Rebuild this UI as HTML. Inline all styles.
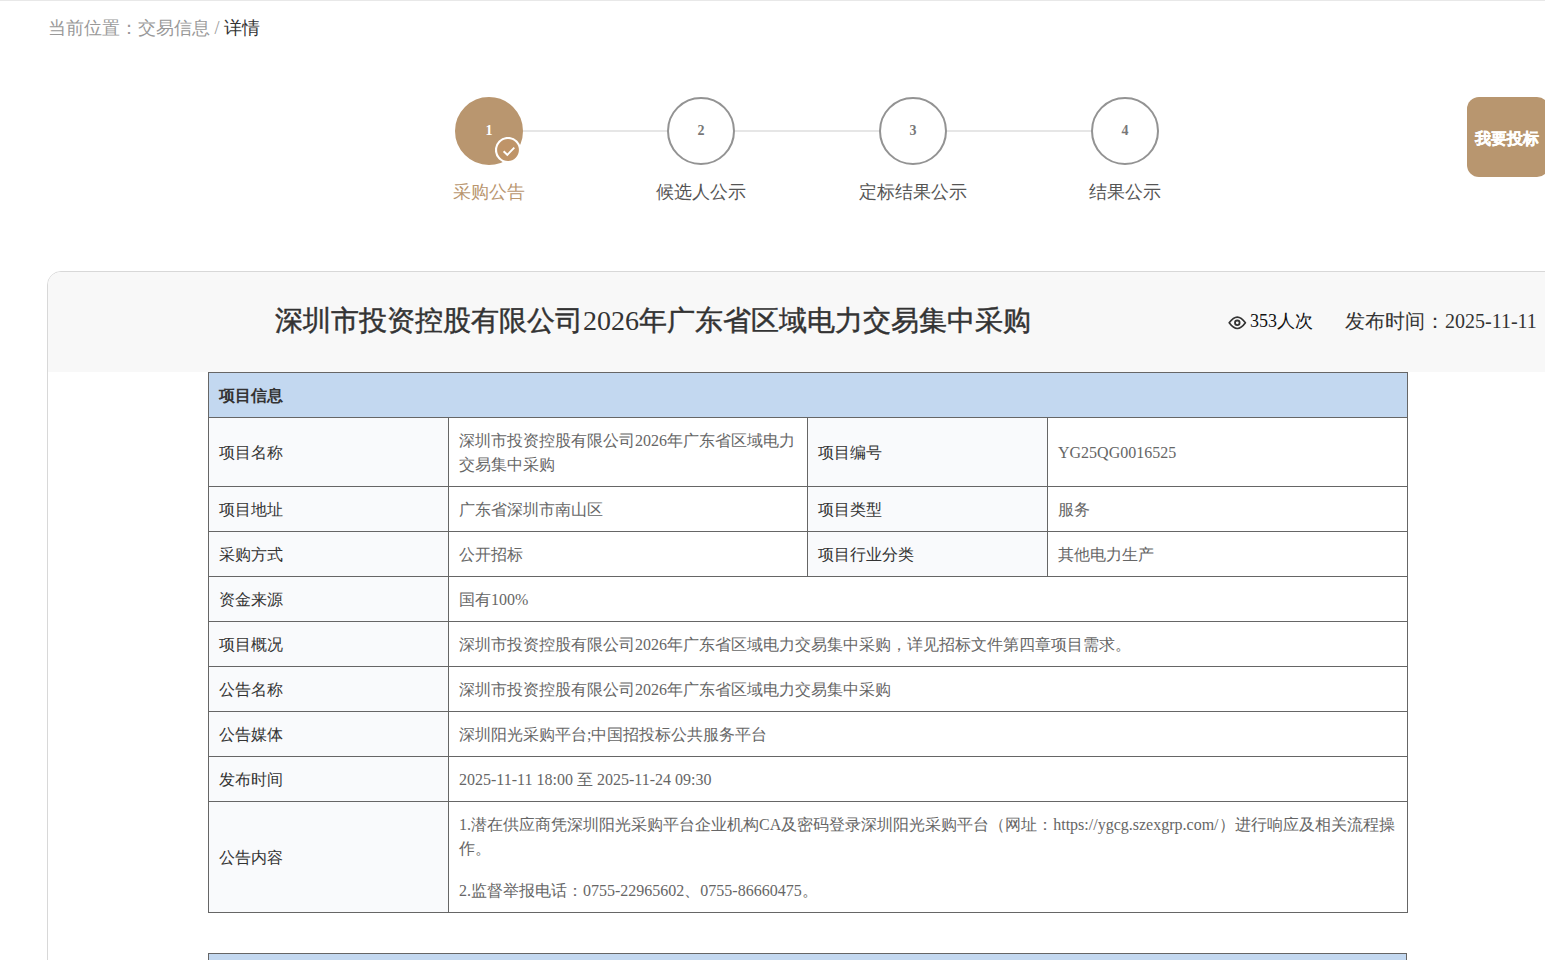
<!DOCTYPE html>
<html><head><meta charset="utf-8">
<style>
html,body{margin:0;padding:0;background:#fff;width:1545px;height:960px;overflow:hidden;position:relative;font-family:"Liberation Serif",serif;color:#333}
.topline{position:absolute;left:0;top:0;width:1545px;height:1px;background:#e8e8e8}
.crumb{position:absolute;left:48px;top:16px;font-size:18px;line-height:24px;color:#999;white-space:nowrap}
.crumb b{font-weight:normal;color:#333}
.line{position:absolute;top:130px;height:2px;background:#e6e6e6}
.circle{position:absolute;top:97px;width:64px;height:64px;border:2px solid #939393;border-radius:50%;background:#fff;text-align:center;line-height:64px;font-size:14px;font-weight:bold;color:#777}
.circle.on{background:#b9966f;border-color:#b9966f;color:#fff}
.badge{position:absolute;left:495px;top:137px}
.slabel{position:absolute;top:180px;width:200px;text-align:center;font-size:18px;line-height:24px;color:#555;white-space:nowrap}
.slabel.on{color:#b9966f}
.btn{position:absolute;left:1467px;top:97px;width:82px;height:80px;border-radius:12px;background:#b8966f;color:#fff;font-size:16px;font-weight:bold;line-height:83px;text-indent:8px;white-space:nowrap;font-family:"Liberation Sans",sans-serif;-webkit-text-stroke:0.3px #fff}
.card{position:absolute;left:47px;top:271px;width:1600px;height:800px;border:1px solid #d8d8d8;border-radius:14px 0 0 0;background:#fff;overflow:hidden}
.chead{position:absolute;left:0;top:0;width:100%;height:100px;background:#f8f8f8}
.title{position:absolute;left:227px;top:31px;font-size:28px;line-height:36px;color:#333;white-space:nowrap;-webkit-text-stroke:0.45px #333}
.title .n{-webkit-text-stroke:0}
.views{position:absolute;left:1180px;top:37px;font-size:18px;line-height:24px;color:#111;white-space:nowrap}
.views svg{position:absolute;left:0;top:7px}
.views span{position:absolute;left:22px;top:0}
.ptime{position:absolute;left:1297px;top:35px;font-size:20px;line-height:28px;color:#333;white-space:nowrap}
table{position:absolute;left:208px;border-collapse:collapse;width:1199px;table-layout:fixed;font-size:16px;line-height:24px}
td{border:1px solid #666;padding:11px 10px 9px;vertical-align:middle;color:#666;background:#fff}
td.l{background:#f9fafc;color:#333}
tr.h td{background:#c3d8f0;color:#333;font-weight:bold}
td p{margin:0}
td p+p{margin-top:18px}
</style></head><body>
<div class="topline"></div>
<div class="crumb">当前位置：交易信息 / <b>详情</b></div>

<div class="line" style="left:523px;width:144px"></div>
<div class="line" style="left:735px;width:144px"></div>
<div class="line" style="left:947px;width:144px"></div>
<div class="circle on" style="left:455px">1</div>
<svg class="badge" width="26" height="26" viewBox="0 0 26 26"><circle cx="13" cy="13" r="12" fill="#bf9468" stroke="#fff" stroke-width="2.2"/><path d="M8.6 14.2 L12.3 17.8 L19.3 10.7" fill="none" stroke="#fff" stroke-width="1.9"/></svg>
<div class="circle" style="left:667px">2</div>
<div class="circle" style="left:879px">3</div>
<div class="circle" style="left:1091px">4</div>
<div class="slabel on" style="left:389px">采购公告</div>
<div class="slabel" style="left:601px">候选人公示</div>
<div class="slabel" style="left:813px">定标结果公示</div>
<div class="slabel" style="left:1025px">结果公示</div>
<div class="btn">我要投标</div>

<div class="card">
  <div class="chead">
    <div class="title">深圳市投资控股有限公司<span class="n">2026</span>年广东省区域电力交易集中采购</div>
    <div class="views"><svg width="19" height="14" viewBox="0 0 19 14"><path d="M1.2 6.8 C4 3 6.8 1.1 9.3 1.1 C11.8 1.1 14.6 3 17.4 6.8 C14.6 10.6 11.8 12.5 9.3 12.5 C6.8 12.5 4 10.6 1.2 6.8 Z" fill="none" stroke="#333" stroke-width="1.7" stroke-linejoin="round"/><circle cx="9.3" cy="6.8" r="2.3" fill="none" stroke="#333" stroke-width="1.8"/></svg><span>353人次</span></div>
    <div class="ptime">发布时间：2025-11-11</div>
  </div>
</div>

<table style="top:372px">
<colgroup><col style="width:240px"><col style="width:359px"><col style="width:240px"><col style="width:360px"></colgroup>
<tr class="h"><td colspan="4">项目信息</td></tr>
<tr><td class="l">项目名称</td><td>深圳市投资控股有限公司2026年广东省区域电力交易集中采购</td><td class="l">项目编号</td><td>YG25QG0016525</td></tr>
<tr><td class="l">项目地址</td><td>广东省深圳市南山区</td><td class="l">项目类型</td><td>服务</td></tr>
<tr><td class="l">采购方式</td><td>公开招标</td><td class="l">项目行业分类</td><td>其他电力生产</td></tr>
<tr><td class="l">资金来源</td><td colspan="3">国有100%</td></tr>
<tr><td class="l">项目概况</td><td colspan="3">深圳市投资控股有限公司2026年广东省区域电力交易集中采购，详见招标文件第四章项目需求。</td></tr>
<tr><td class="l">公告名称</td><td colspan="3">深圳市投资控股有限公司2026年广东省区域电力交易集中采购</td></tr>
<tr><td class="l">公告媒体</td><td colspan="3">深圳阳光采购平台;中国招投标公共服务平台</td></tr>
<tr><td class="l">发布时间</td><td colspan="3">2025-11-11 18:00 至 2025-11-24 09:30</td></tr>
<tr><td class="l">公告内容</td><td colspan="3"><p>1.潜在供应商凭深圳阳光采购平台企业机构CA及密码登录深圳阳光采购平台（网址：https://ygcg.szexgrp.com/）进行响应及相关流程操作。</p><p>2.监督举报电话：0755-22965602、0755-86660475。</p></td></tr>
</table>
<table style="top:953px">
<tr class="h"><td>&nbsp;</td></tr>
</table>
</body></html>
